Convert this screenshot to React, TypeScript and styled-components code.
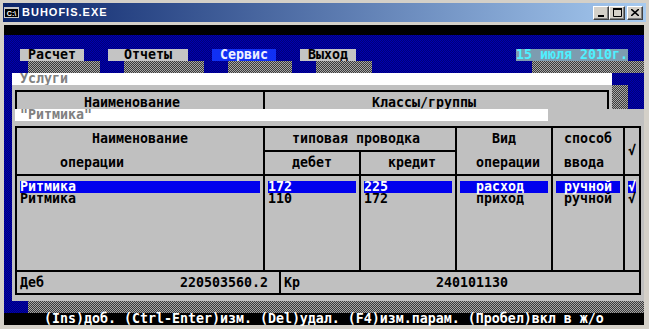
import React from "react";
import styled, { createGlobalStyle, css } from "styled-components";

const GlobalStyle = createGlobalStyle`
  html, body {
    margin: 0;
    padding: 0;
  }
  body {
    background: #d4d0c8;
    overflow: hidden;
  }
`;

/* dithered fills of the text-mode screen */
const blueDither = css`
  background-color: #000090;
  background-image: repeating-conic-gradient(#0000b0 0 25%, #000078 0 50%);
  background-size: 2px 2px;
`;

const shadeDither = css`
  background-image: repeating-conic-gradient(#a6a6a6 0 25%, #3a3a3a 0 50%);
  background-size: 2px 2px;
`;

/**
 * Window chrome
 */
const Frame = styled.div`
  width: 649px;
  height: 329px;
  box-sizing: border-box;
  padding: 3px 3px 4px 3px;
  background: #d4d0c8;
  display: flex;
  flex-direction: column;
`;

const TitleBar = styled.div`
  height: 19px;
  display: flex;
  align-items: center;
  padding: 0 3px 0 1px;
  background: linear-gradient(to right, #0a246a, #a6caf0);
`;

const CaptionIcon = styled.span`
  width: 15px;
  height: 11px;
  box-sizing: border-box;
  background: #000;
  border: 1px solid #c8c8c8;
  border-top-width: 2px;
  color: #fff;
  font: bold 7px/7px "Liberation Sans", sans-serif;
  display: flex;
  align-items: center;
  justify-content: center;
  margin-right: 3px;
`;

const Caption = styled.span`
  flex: 1;
  color: #fff;
  font: bold 11px/1 "Liberation Sans", Arial, sans-serif;
  letter-spacing: 1px;
`;

const CaptionButton = styled.div<{ $gap?: number }>`
  width: 16px;
  height: 14px;
  box-sizing: border-box;
  margin-left: ${p => p.$gap ?? 0}px;
  background: #d4d0c8;
  border: 1px solid;
  border-color: #fff #404040 #404040 #fff;
  box-shadow: inset -1px -1px #808080;
  display: flex;
  align-items: center;
  justify-content: center;
`;

/**
 * Text-mode console: 80x25 cells of 8x12 px
 */
const Console = styled.div`
  width: 640px;
  height: 300px;
  margin: 3px 0 0 1px;
  display: flex;
  flex-direction: column;
  font-family: "DejaVu Sans Mono", "Liberation Mono", monospace;
  font-size: 13.29px;
  font-weight: bold;
  line-height: 12px;
  white-space: pre;
  ${blueDither}
`;

const TopStrip = styled.div`
  height: 10px;
  background: #000;
`;

const MenuGrid = styled.div`
  display: grid;
  grid-template-columns: repeat(80, 8px);
  grid-template-rows: 12px 12px;
  margin-top: 14px;
`;

const MenuBox = styled.div<{ $col: number; $span: number; $pad: number; $active?: boolean }>`
  grid-row: 1;
  grid-column: ${p => p.$col} / span ${p => p.$span};
  padding-left: ${p => p.$pad}px;
  background: ${p => (p.$active ? "#1030f4" : "#c4c4c4")};
  color: ${p => (p.$active ? "#eef0ff" : "#000")};
`;

const DateBox = styled(MenuBox)`
  background: #7d9cb0;
  color: #4ef0ff;
`;

const MenuShadow = styled.div<{ $col: number; $span: number }>`
  grid-row: 2;
  grid-column: ${p => p.$col} / span ${p => p.$span};
  ${shadeDither}
`;

const Main = styled.div`
  height: 240px;
  padding-left: 8px;
  display: flex;
  flex-direction: column;
`;

const WhiteBar = styled.div<{ $w: number; $pad: number }>`
  width: ${p => p.$w}px;
  height: 12px;
  box-sizing: border-box;
  padding-left: ${p => p.$pad}px;
  background: #fff;
  color: #808080;
`;

const UpperRow = styled.div`
  height: 24px;
  display: flex;
`;

const UpperPanel = styled.div`
  width: 600px;
  box-sizing: border-box;
  padding: 5px 0 0 3px;
  background: #c0c0c0;
`;

const UpperFrame = styled.div`
  width: 594px;
  height: 19px;
  box-sizing: border-box;
  border: 2px solid #000;
  border-bottom: 0;
  display: flex;
`;

const UpperCell = styled.div<{ $w?: number; $pad: number }>`
  ${p => (p.$w ? `width: ${p.$w}px; flex: none;` : "flex: 1;")}
  box-sizing: border-box;
  padding: 5px 0 0 ${p => p.$pad}px;
  color: #000;
`;

const VRule = styled.div`
  width: 2px;
  flex: none;
  background: #000;
`;

const SideShadow = styled.div<{ $w: number }>`
  width: ${p => p.$w}px;
  ${shadeDither}
`;

const LowerPanel = styled.div`
  width: 632px;
  height: 192px;
  box-sizing: border-box;
  padding-left: 3px;
  background: #c0c0c0;
`;

const BottomShadow = styled.div`
  height: 12px;
  margin-left: 16px;
  ${shadeDither}
`;

const StatusBar = styled.div`
  height: 12px;
  padding-left: 40px;
  background: #000;
  color: #fff;
`;

/**
 * Operations table
 */
const Table = styled.div`
  display: grid;
  grid-template-columns: 246px 94px 94px 94px 70px 14px;
  grid-template-rows: 22px 22px 94px 21px;
  gap: 2px;
  width: 626px;
  box-sizing: border-box;
  margin-top: 5px;
  border: 2px solid #000;
  background: #000;
  color: #000;
`;

const Cell = styled.div<{ $col: string; $row: string; $top?: number; $side?: number }>`
  grid-column: ${p => p.$col};
  grid-row: ${p => p.$row};
  padding: ${p => p.$top ?? 5}px ${p => p.$side ?? 0}px 0;
  background: #c0c0c0;
  display: flex;
  flex-direction: column;
`;

const Line = styled.div<{ $x?: number }>`
  height: 12px;
  padding-left: ${p => p.$x ?? 0}px;
`;

const DataLine = styled.div<{ $hl?: boolean; $x?: number }>`
  height: 12px;
  padding-left: ${p => p.$x ?? 0}px;
  background: ${p => (p.$hl ? "#0000ee" : "transparent")};
  color: ${p => (p.$hl ? "#fff" : "#000")};
`;

const FooterCell = styled.div`
  grid-column: 1 / -1;
  grid-row: 4;
  display: flex;
  background: #c0c0c0;
`;

const FooterPart = styled.div<{ $w?: number }>`
  ${p => (p.$w ? `width: ${p.$w}px; flex: none;` : "flex: 1;")}
  box-sizing: border-box;
  padding: 5px 11px 0 3px;
  display: flex;
  justify-content: ${p => (p.$w ? "space-between" : "flex-start")};
`;

const FooterValue = styled.span<{ $gap?: number }>`
  margin-left: ${p => p.$gap ?? 0}px;
`;

const MENU = [
  { label: "Расчет", col: 3, span: 8, pad: 8, sCol: 4, sSpan: 9 },
  { label: "Отчеты", col: 14, span: 10, pad: 16, sCol: 16, sSpan: 10 },
  { label: "Сервис", col: 27, span: 8, pad: 8, sCol: 29, sSpan: 8, active: true },
  { label: "Выход", col: 38, span: 7, pad: 8, sCol: 40, sSpan: 7 },
];

const ROWS = [
  { name: "Ритмика", debit: "172", credit: "225", kind: "расход", mode: "ручной" },
  { name: "Ритмика", debit: "110", credit: "172", kind: "приход", mode: "ручной" },
];

const App: React.FC = () => {
  return (
    <>
      <GlobalStyle />
      <Frame>
        <TitleBar>
          <CaptionIcon>C:\</CaptionIcon>
          <Caption>BUHOFIS.EXE</Caption>
          <CaptionButton>
            <svg width="8" height="8" viewBox="0 0 8 8">
              <rect x="1" y="6" width="6" height="2" fill="#000" />
            </svg>
          </CaptionButton>
          <CaptionButton>
            <svg width="9" height="9" viewBox="0 0 9 9">
              <path d="M0.5 1.5h8v7h-8z" fill="none" stroke="#000" />
              <rect x="0" y="0" width="9" height="2" fill="#000" />
            </svg>
          </CaptionButton>
          <CaptionButton $gap={2}>
            <svg width="8" height="7" viewBox="0 0 8 7">
              <path d="M0 0l8 7M8 0L0 7" stroke="#000" strokeWidth="1.6" />
            </svg>
          </CaptionButton>
        </TitleBar>

        <Console>
          <TopStrip />

          {/* top menu with drop shadows */}
          <MenuGrid>
            {MENU.map(m => (
              <React.Fragment key={m.label}>
                <MenuBox $col={m.col} $span={m.span} $pad={m.pad} $active={m.active}>
                  {m.label}
                </MenuBox>
                <MenuShadow $col={m.sCol} $span={m.sSpan} />
              </React.Fragment>
            ))}
            <DateBox $col={65} $span={14} $pad={0}>
              15 июля 2010г.
            </DateBox>
            <MenuShadow $col={67} $span={14} />
          </MenuGrid>

          <Main>
            <WhiteBar $w={600} $pad={8}>
              Услуги
            </WhiteBar>
            <UpperRow>
              <UpperPanel>
                <UpperFrame>
                  <UpperCell $w={246} $pad={67}>
                    Наименование
                  </UpperCell>
                  <VRule />
                  <UpperCell $pad={107}>Классы/группы</UpperCell>
                </UpperFrame>
              </UpperPanel>
              <SideShadow $w={16} />
            </UpperRow>

            <LowerPanel>
              <WhiteBar $w={533} $pad={5}>
                "Ритмика"
              </WhiteBar>
              <Table>
                <Cell $col="1" $row="1 / span 2">
                  <Line $x={75}>Наименование</Line>
                  <Line />
                  <Line $x={43}>операции</Line>
                </Cell>
                <Cell $col="2 / span 2" $row="1">
                  <Line $x={27}>типовая проводка</Line>
                </Cell>
                <Cell $col="2" $row="2">
                  <Line $x={27}>дебет</Line>
                </Cell>
                <Cell $col="3" $row="2">
                  <Line $x={27}>кредит</Line>
                </Cell>
                <Cell $col="4" $row="1 / span 2">
                  <Line $x={35}>Вид</Line>
                  <Line />
                  <Line $x={19}>операции</Line>
                </Cell>
                <Cell $col="5" $row="1 / span 2">
                  <Line $x={11}>способ</Line>
                  <Line />
                  <Line $x={11}>ввода</Line>
                </Cell>
                <Cell $col="6" $row="1 / span 2" $top={17}>
                  <Line $x={3}>√</Line>
                </Cell>

                <Cell $col="1" $row="3" $side={3}>
                  {ROWS.map((r, i) => (
                    <DataLine key={i} $hl={i === 0}>{r.name}</DataLine>
                  ))}
                </Cell>
                <Cell $col="2" $row="3" $side={3}>
                  {ROWS.map((r, i) => (
                    <DataLine key={i} $hl={i === 0}>{r.debit}</DataLine>
                  ))}
                </Cell>
                <Cell $col="3" $row="3" $side={3}>
                  {ROWS.map((r, i) => (
                    <DataLine key={i} $hl={i === 0}>{r.credit}</DataLine>
                  ))}
                </Cell>
                <Cell $col="4" $row="3" $side={3}>
                  {ROWS.map((r, i) => (
                    <DataLine key={i} $hl={i === 0} $x={16}>{r.kind}</DataLine>
                  ))}
                </Cell>
                <Cell $col="5" $row="3" $side={3}>
                  {ROWS.map((r, i) => (
                    <DataLine key={i} $hl={i === 0} $x={8}>{r.mode}</DataLine>
                  ))}
                </Cell>
                <Cell $col="6" $row="3" $side={3}>
                  {ROWS.map((r, i) => (
                    <DataLine key={i} $hl={i === 0}>√</DataLine>
                  ))}
                </Cell>

                <FooterCell>
                  <FooterPart $w={262}>
                    <span>Деб</span>
                    <span>220503560.2</span>
                  </FooterPart>
                  <VRule />
                  <FooterPart>
                    <span>Кр</span>
                    <FooterValue $gap={136}>240101130</FooterValue>
                  </FooterPart>
                </FooterCell>
              </Table>
            </LowerPanel>
            <BottomShadow />
          </Main>

          <StatusBar>(Ins)доб. (Ctrl-Enter)изм. (Del)удал. (F4)изм.парам. (Пробел)вкл в ж/о</StatusBar>
        </Console>
      </Frame>
    </>
  );
};

export default App;
